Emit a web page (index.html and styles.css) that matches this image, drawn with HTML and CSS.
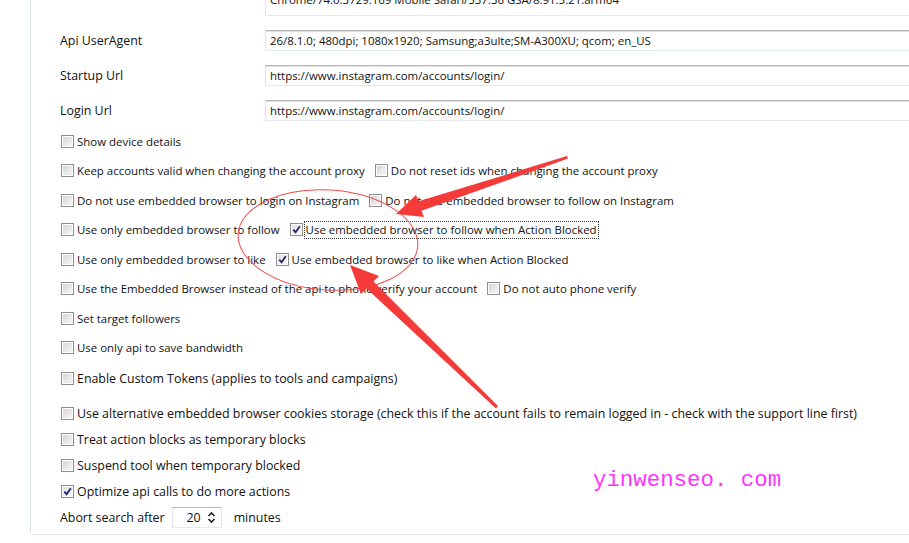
FILE: index.html
```html
<!DOCTYPE html>
<html>
<head>
<meta charset="utf-8">
<link rel="stylesheet" href="styles.css">
</head>
<body>
<div class="panel">
  <div class="field first">
    <div class="field-label">Embedded Browser Setting</div>
    <div class="field-input">Chrome/74.0.3729.169 Mobile Safari/537.36 GSA/8.91.5.21.arm64</div>
  </div>
  <div class="field">
    <div class="field-label">Api UserAgent</div>
    <div class="field-input">26/8.1.0; 480dpi; 1080x1920; Samsung;a3ulte;SM-A300XU; qcom; en_US</div>
  </div>
  <div class="field">
    <div class="field-label">Startup Url</div>
    <div class="field-input">https://www.instagram.com/accounts/login/</div>
  </div>
  <div class="field">
    <div class="field-label">Login Url</div>
    <div class="field-input">https://www.instagram.com/accounts/login/</div>
  </div>

  <div class="row row-first"><span class="opt"><span class="cb"></span>Show device details</span></div>
  <div class="row"><span class="opt"><span class="cb"></span>Keep accounts valid when changing the account proxy</span><span class="opt"><span class="cb"></span>Do not reset ids when changing the account proxy</span></div>
  <div class="row"><span class="opt"><span class="cb"></span>Do not use embedded browser to login on Instagram</span><span class="opt"><span class="cb"></span>Do not use embedded browser to follow on Instagram</span></div>
  <div class="row"><span class="opt"><span class="cb"></span>Use only embedded browser to follow</span><span class="opt"><span class="cb checked"><svg viewBox="0 0 9 9" width="9" height="9"><path d="M1.3 4.6 L3.6 7.3 L7.8 1.2" fill="none" stroke="#27276b" stroke-width="1.9"/></svg></span><span class="focus">Use embedded browser to follow when Action Blocked</span></span></div>
  <div class="row"><span class="opt"><span class="cb"></span>Use only embedded browser to like</span><span class="opt"><span class="cb checked"><svg viewBox="0 0 9 9" width="9" height="9"><path d="M1.3 4.6 L3.6 7.3 L7.8 1.2" fill="none" stroke="#27276b" stroke-width="1.9"/></svg></span>Use embedded browser to like when Action Blocked</span></div>
  <div class="row"><span class="opt"><span class="cb"></span>Use the Embedded Browser instead of the api to phone verify your account</span><span class="opt"><span class="cb"></span>Do not auto phone verify</span></div>
  <div class="row"><span class="opt"><span class="cb"></span>Set target followers</span></div>
  <div class="row"><span class="opt"><span class="cb"></span>Use only api to save bandwidth</span></div>
  <div class="row row-wide lg"><span class="opt"><span class="cb"></span>Enable Custom Tokens (applies to tools and campaigns)</span></div>

  <div class="row row-tight row-gap lg"><span class="opt"><span class="cb"></span>Use alternative embedded browser cookies storage (check this if the account fails to remain logged in - check with the support line first)</span></div>
  <div class="row row-tight lg"><span class="opt"><span class="cb"></span>Treat action blocks as temporary blocks</span></div>
  <div class="row row-tight lg"><span class="opt"><span class="cb"></span>Suspend tool when temporary blocked</span></div>
  <div class="row row-tight lg"><span class="opt"><span class="cb checked"><svg viewBox="0 0 9 9" width="9" height="9"><path d="M1.3 4.6 L3.6 7.3 L7.8 1.2" fill="none" stroke="#27276b" stroke-width="1.9"/></svg></span>Optimize api calls to do more actions</span></div>

  <div class="abort lg">
    <span>Abort search after</span>
    <span class="spin"><span class="spin-val">20</span><svg class="spin-arrows" viewBox="0 0 9 13" width="9" height="13"><path d="M1.5 5 L4.5 2 L7.5 5" fill="none" stroke="#222" stroke-width="1.6"/><path d="M1.5 8 L4.5 11 L7.5 8" fill="none" stroke="#222" stroke-width="1.6"/></svg></span>
    <span>minutes</span>
  </div>
</div>

<div class="watermark">yinwenseo. com</div>

<svg class="annot" width="909" height="543" viewBox="0 0 909 543">
  <ellipse cx="328" cy="240" rx="90" ry="50" transform="rotate(4 328 240)" fill="none" stroke="#f24a4a" stroke-width="1"/>
  <polygon points="396,214 416,195 418.5,201.3 567,156 568,158.5 421.5,210.8 424,217" fill="#f53a3a"/>
  <polygon points="350,265 379,276 373.5,281.4 498,406 496,408.5 366.5,288.6 361,294" fill="#f53a3a"/>
</svg>
</body>
</html>
```

FILE: styles.css
```css
html, body {
  margin: 0;
  padding: 0;
}

body {
  width: 909px;
  height: 543px;
  overflow: hidden;
  position: relative;
  background: #ffffff;
  font-family: "Open Sans", "Noto Sans", sans-serif;
  font-size: 11.45px;
  color: #111111;
}

.lg {
  font-size: 12.4px;
}

.panel {
  width: 1000px;
  margin-top: -20px;
  margin-left: 30px;
  padding: 15px 0 5.5px 29px;
  border-left: 1px solid #dbe2e8;
  border-bottom: 1px solid #dbe2e8;
  border-bottom-left-radius: 4px;
}

.field {
  display: flex;
  align-items: center;
  height: 21px;
}

.field + .field {
  margin-top: 14px;
}

.field.first {
  align-items: flex-start;
}

.field.first .field-label {
  margin-top: -23px;
}

.field.first .field-input {
  height: 40px;
  margin-top: -19px;
  display: flex;
  flex-direction: column;
  justify-content: flex-end;
  padding-bottom: 7px;
  line-height: 17px;
}

.field-label {
  width: 205px;
  flex: none;
  font-size: 12.4px;
  line-height: 17px;
  white-space: nowrap;
}

.field-input {
  flex: 1;
  height: 21px;
  box-sizing: border-box;
  border: 1px solid #e2e3ea;
  border-top-color: #b3b5ba;
  border-bottom-color: #e3e9ef;
  box-shadow: inset 0 1px 0 #e2e2e2;
  padding: 0 4px;
  line-height: 19px;
  white-space: nowrap;
  overflow: hidden;
}

.row {
  display: flex;
  align-items: center;
  height: 17px;
  margin-top: 12.5px;
  white-space: nowrap;
}

.row-first {
  margin-top: 11.5px;
}

.row-wide {
  margin-top: 13.5px;
}

.row-tight {
  margin-top: 9px;
}

.row-tight.row-gap {
  margin-top: 18px;
}

.opt {
  display: flex;
  align-items: center;
  line-height: 17px;
}

.opt + .opt {
  margin-left: 10px;
}

.cb {
  width: 13px;
  height: 13px;
  box-sizing: border-box;
  flex: none;
  margin: 0 3px 0 1px;
  border: 1px solid #8f8f8f;
  padding: 1px;
  background: #f4f4f4;
  background-image: linear-gradient(135deg, #cfcfcf 0%, #e9e9e9 55%, #f8f8f8 100%);
  background-clip: content-box;
  box-shadow: inset 0 0 0 1px #ffffff;
  display: flex;
  align-items: center;
  justify-content: center;
}

.opt + .opt .cb {
  margin-left: 0;
}

.cb.checked {
  background-image: linear-gradient(135deg, #dcdcdc 0%, #f0f0f0 60%, #fbfbfb 100%);
}

.cb svg {
  display: block;
}

.focus {
  margin-left: -2px;
  padding: 0 1px;
  border: 1px dotted #333333;
  line-height: 16px;
}

.abort {
  display: flex;
  align-items: center;
  height: 21px;
  margin-top: 7.5px;
}

.spin {
  width: 50px;
  height: 21px;
  box-sizing: border-box;
  margin: 0 12px 0 7px;
  border: 1px solid #e2e3ea;
  border-top-color: #b3b5ba;
  border-bottom-color: #e3e9ef;
  display: flex;
  align-items: center;
  justify-content: flex-end;
  padding-right: 5px;
}

.spin-val {
  margin-right: 6px;
}

.spin-arrows {
  display: block;
}

.watermark {
  position: absolute;
  left: 593px;
  top: 462px;
  font-family: "Liberation Mono", "DejaVu Sans Mono", monospace;
  font-size: 22.4px;
  line-height: 36px;
  color: #ff33ff;
  white-space: nowrap;
}

.annot {
  position: absolute;
  left: 0;
  top: 0;
  pointer-events: none;
}
```
